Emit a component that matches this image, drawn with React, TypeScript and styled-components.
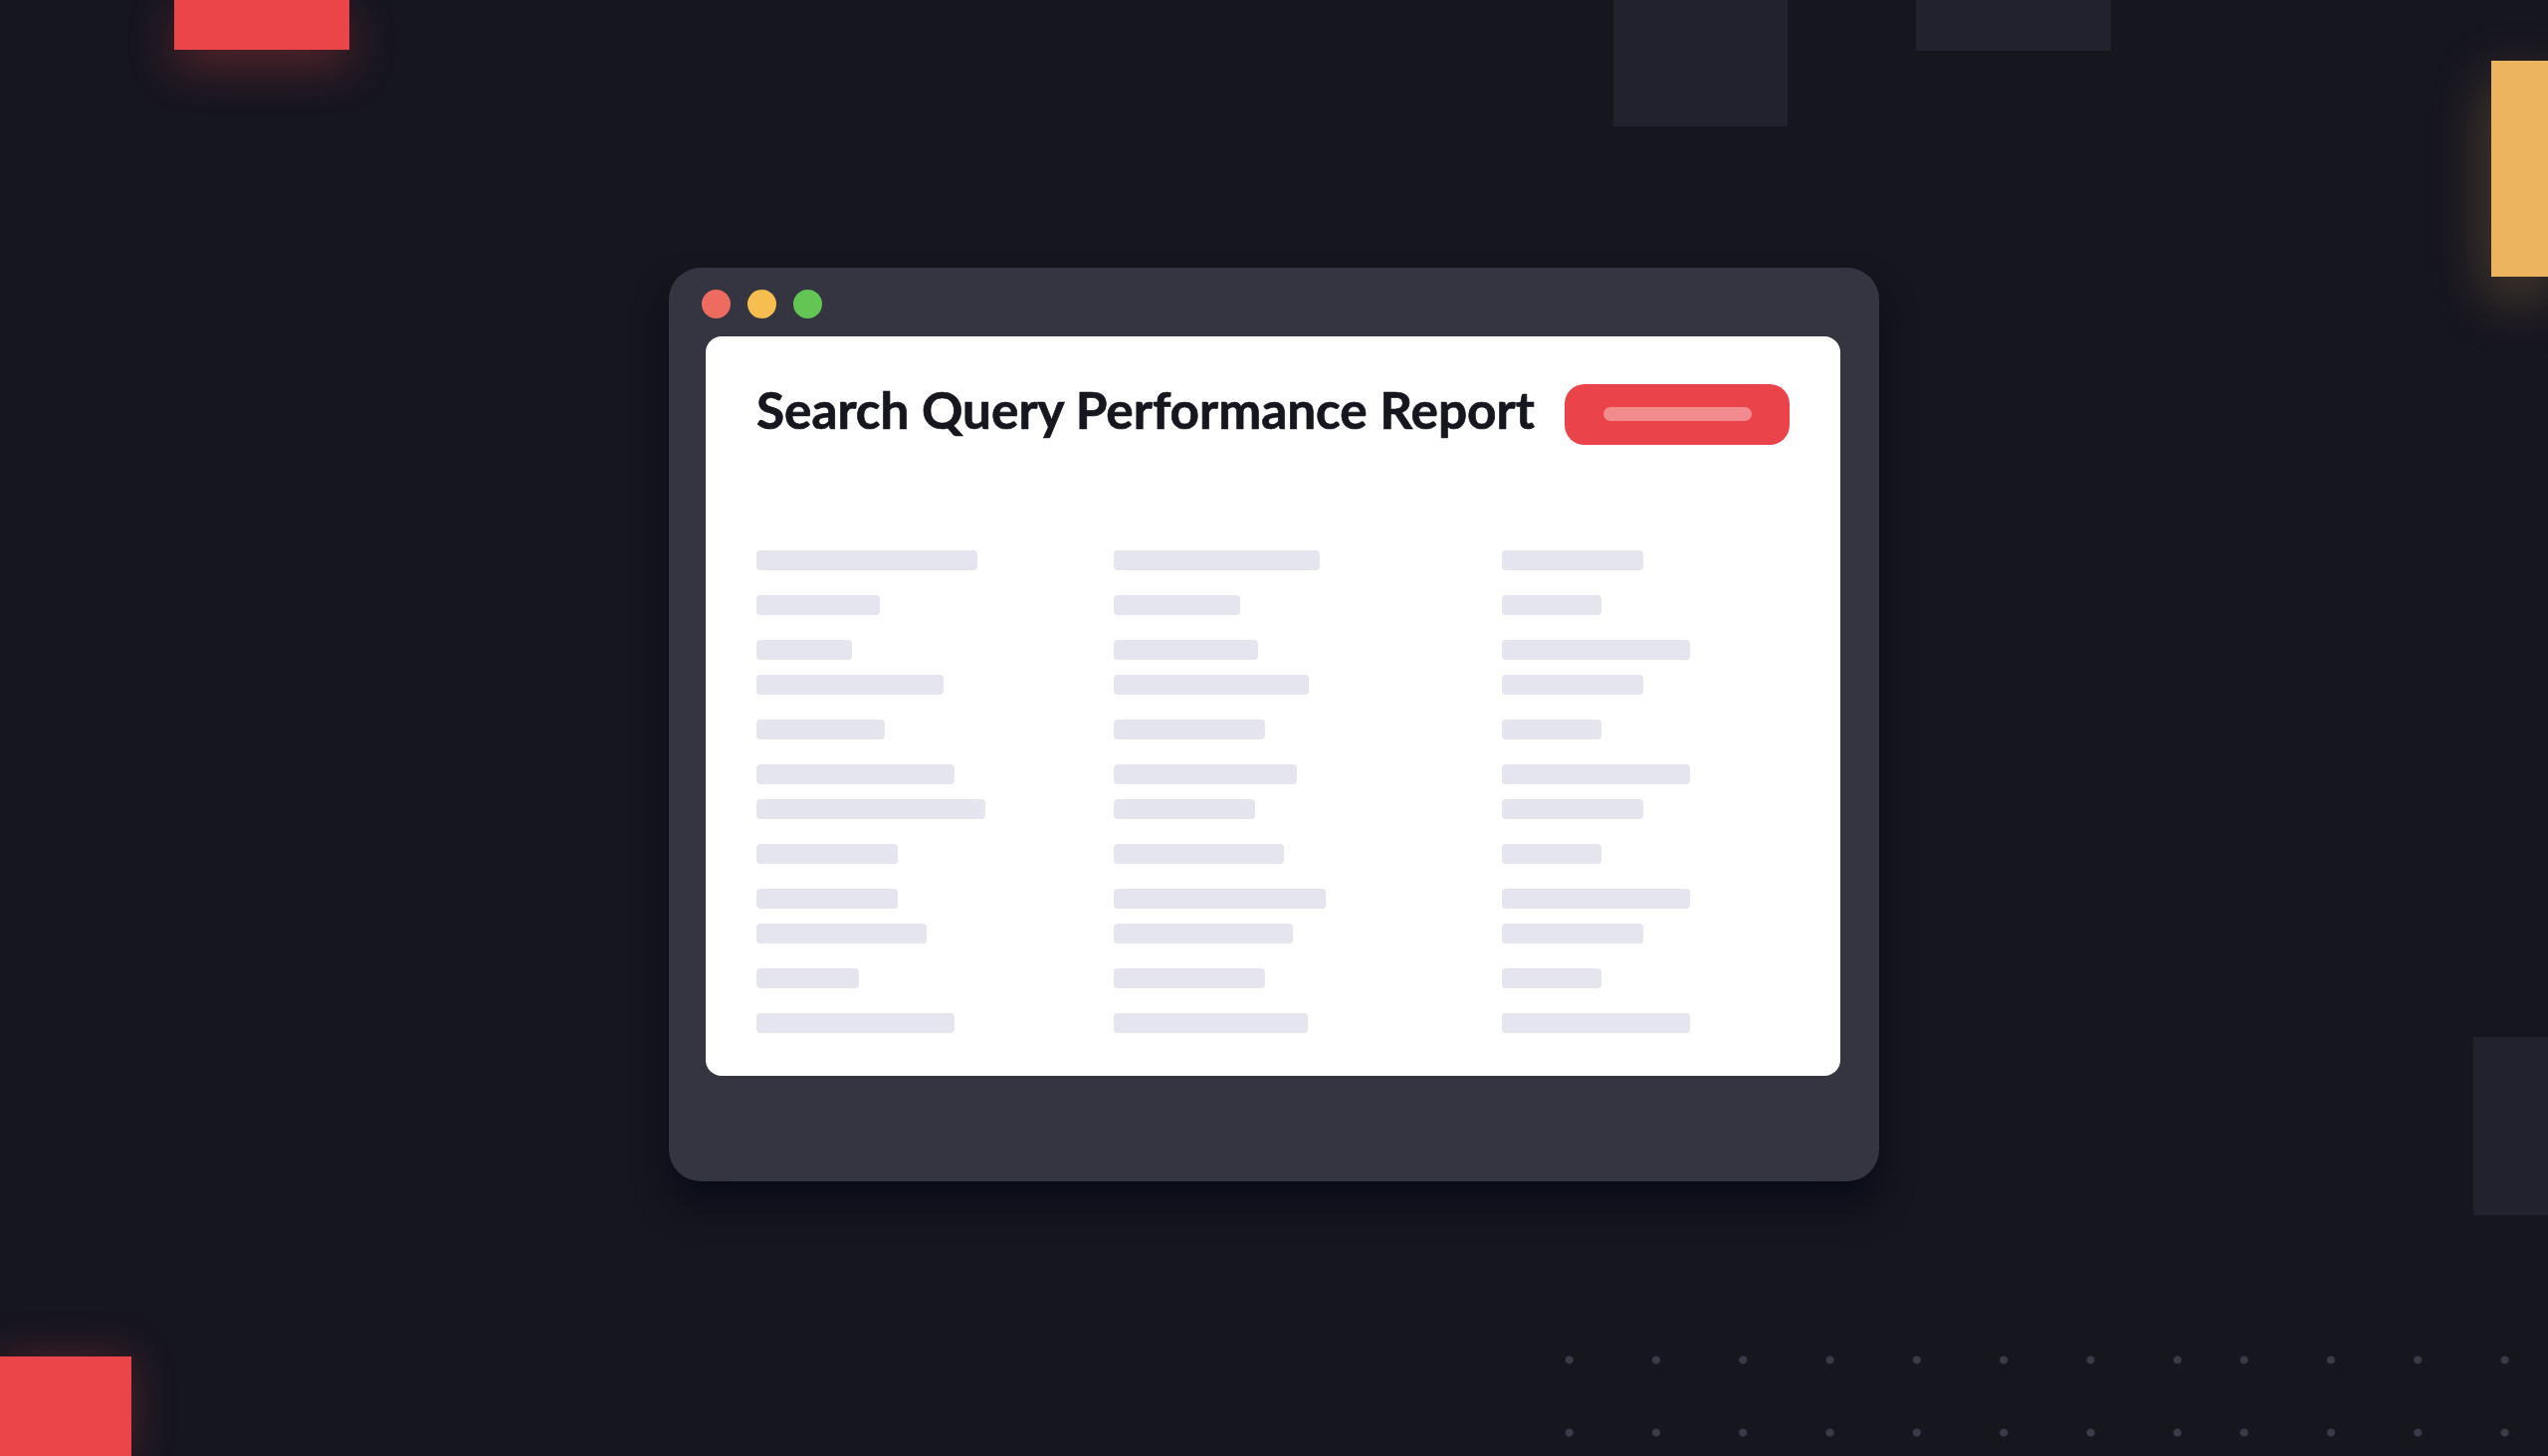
import styled, { createGlobalStyle } from 'styled-components'

const GlobalStyle = createGlobalStyle`
  html,
  body {
    margin: 0;
    padding: 0;
    background: #16161f;
  }

  * {
    box-sizing: border-box;
  }
`

const Stage = styled.main`
  position: relative;
  display: flex;
  align-items: center;
  justify-content: center;
  width: 100%;
  height: 100vh;
  padding-bottom: 8px;
  overflow: hidden;
  background: #16161f;
  font-family: Lato, 'Noto Sans', sans-serif;
`

type BlockProps = {
  $x: number
  $y: number
  $w: number
  $h: number
  $color: string
  $glow?: string
}

// floating rectangles scattered over the backdrop
const Block = styled.div<BlockProps>`
  position: absolute;
  left: ${({ $x }) => `${$x}px`};
  top: ${({ $y }) => `${$y}px`};
  width: ${({ $w }) => `${$w}px`};
  height: ${({ $h }) => `${$h}px`};
  background: ${({ $color }) => $color};
  box-shadow: ${({ $glow }) => $glow ?? 'none'};
`

const DotField = styled.div<{ $x: number; $w: number }>`
  position: absolute;
  left: ${({ $x }) => `${$x}px`};
  top: 1330px;
  width: ${({ $w }) => `${$w}px`};
  height: 146px;
  background-image: radial-gradient(circle, #3a3b48 3.6px, transparent 4.4px);
  background-size: 87.3px 73px;
  background-position: 0 0;
`

const Window = styled.section`
  position: relative;
  z-index: 1;
  display: flex;
  flex-direction: column;
  width: 1216px;
  padding: 0 39px 106px 37px;
  background: #343541;
  border-radius: 32px;
  box-shadow: 0 22px 34px rgba(6, 8, 22, 0.75);
`

const TitleBar = styled.div`
  display: flex;
  align-items: center;
  gap: 17px;
  height: 69px;
  padding-top: 4px;
  margin-left: -4px;
`

const Light = styled.span<{ $color: string }>`
  width: 29px;
  height: 29px;
  border-radius: 50%;
  background: ${({ $color }) => $color};
`

const Panel = styled.div`
  display: flex;
  flex-direction: column;
  padding: 48px 51px 43px;
  background: #ffffff;
  border-radius: 16px;
`

const Header = styled.header`
  display: flex;
  align-items: center;
  justify-content: space-between;
`

const Title = styled.h1`
  margin: 0 0 9px;
  color: #16161f;
  font-family: Lato, 'Noto Sans', sans-serif;
  font-size: 51.3px;
  font-weight: 700;
  line-height: 1;
  -webkit-text-stroke: 0.7px #16161f;
`

const ActionButton = styled.button`
  display: flex;
  align-items: center;
  justify-content: center;
  width: 226px;
  height: 61px;
  padding: 0;
  border: none;
  border-radius: 20px;
  background: #ea434a;
  cursor: pointer;
`

const ButtonLabel = styled.span`
  width: 149px;
  height: 14px;
  border-radius: 7px;
  background: #f28b8e;
`

const Table = styled.div`
  display: grid;
  grid-template-columns: 359px 390px 1fr;
  row-gap: 25px;
  margin-top: 106px;
`

const Cell = styled.div`
  display: flex;
  flex-direction: column;
  gap: 15px;
`

const Line = styled.span`
  display: block;
  height: 20px;
  border-radius: 4px;
  background: #e5e5ef;
`

// widths of placeholder lines, per row and column
const rows: number[][][] = [
  [[222], [207], [142]],
  [[124], [127], [100]],
  [[96, 188], [145, 196], [189, 142]],
  [[129], [152], [100]],
  [[199, 230], [184, 142], [189, 142]],
  [[142], [171], [100]],
  [[142, 171], [213, 180], [189, 142]],
  [[103], [152], [100]],
  [[199], [195], [189]],
]

const lights = ['#ee6b60', '#f5be4f', '#62c554']

export default function App() {
  return (
    <>
      <GlobalStyle />
      <Stage>
        <Block $x={175} $y={0} $w={176} $h={50} $color="#eb4549" $glow="0 16px 48px rgba(235, 69, 73, 0.32)" />
        <Block $x={1621} $y={0} $w={175} $h={127} $color="#22222e" />
        <Block $x={1925} $y={0} $w={196} $h={51} $color="#22222e" />
        <Block $x={2503} $y={61} $w={57} $h={217} $color="#edb45f" $glow="0 20px 60px rgba(237, 180, 95, 0.3)" />
        <Block $x={2485} $y={1042} $w={75} $h={179} $color="#22222e" />
        <Block $x={0} $y={1363} $w={132} $h={100} $color="#eb4549" $glow="0 0 44px rgba(235, 69, 73, 0.28)" />
        <DotField $x={1533} $w={699} />
        <DotField $x={2211} $w={349} />

        <Window>
          <TitleBar>
            {lights.map((color) => (
              <Light key={color} $color={color} />
            ))}
          </TitleBar>

          <Panel>
            <Header>
              <Title>Search Query Performance Report</Title>
              <ActionButton aria-label="Export">
                <ButtonLabel />
              </ActionButton>
            </Header>

            <Table>
              {rows.map((row, r) =>
                row.map((cell, c) => (
                  <Cell key={`${r}-${c}`}>
                    {cell.map((w, i) => (
                      <Line key={i} style={{ width: w }} />
                    ))}
                  </Cell>
                )),
              )}
            </Table>
          </Panel>
        </Window>
      </Stage>
    </>
  )
}
